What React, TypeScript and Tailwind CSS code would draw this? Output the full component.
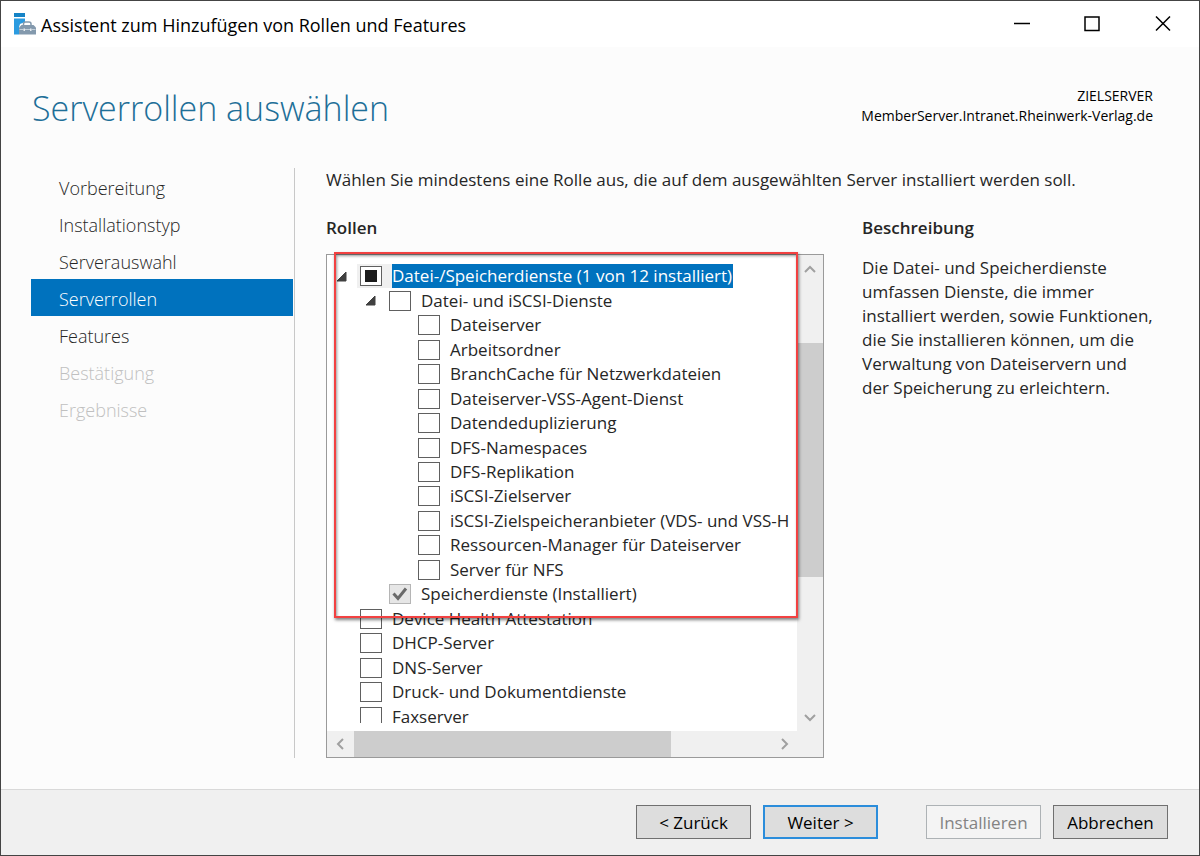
import React from 'react';

interface RoleItem {
  id: string;
  label: string;
  level: 0 | 1 | 2;
  expanded?: boolean;
  state?: 'partial' | 'checked' | 'empty';
  selected?: boolean;
}

interface StepItem {
  label: string;
  state: 'open' | 'active' | 'disabled';
}

const steps: StepItem[] = [
  { label: 'Vorbereitung', state: 'open' },
  { label: 'Installationstyp', state: 'open' },
  { label: 'Serverauswahl', state: 'open' },
  { label: 'Serverrollen', state: 'active' },
  { label: 'Features', state: 'open' },
  { label: 'Bestätigung', state: 'disabled' },
  { label: 'Ergebnisse', state: 'disabled' },
];

const roles: RoleItem[] = [
  { id: 'storage', label: 'Datei-/Speicherdienste (1 von 12 installiert)', level: 0, expanded: true, state: 'partial', selected: true },
  { id: 'file-iscsi', label: 'Datei- und iSCSI-Dienste', level: 1, expanded: true },
  { id: 'fileserver', label: 'Dateiserver', level: 2 },
  { id: 'workfolders', label: 'Arbeitsordner', level: 2 },
  { id: 'branchcache', label: 'BranchCache für Netzwerkdateien', level: 2 },
  { id: 'vss-agent', label: 'Dateiserver-VSS-Agent-Dienst', level: 2 },
  { id: 'dedup', label: 'Datendeduplizierung', level: 2 },
  { id: 'dfs-n', label: 'DFS-Namespaces', level: 2 },
  { id: 'dfs-r', label: 'DFS-Replikation', level: 2 },
  { id: 'iscsi-target', label: 'iSCSI-Zielserver', level: 2 },
  { id: 'iscsi-provider', label: 'iSCSI-Zielspeicheranbieter (VDS- und VSS-H', level: 2 },
  { id: 'fsrm', label: 'Ressourcen-Manager für Dateiserver', level: 2 },
  { id: 'nfs', label: 'Server für NFS', level: 2 },
  { id: 'storage-services', label: 'Speicherdienste (Installiert)', level: 1, state: 'checked' },
  { id: 'dha', label: 'Device Health Attestation', level: 0 },
  { id: 'dhcp', label: 'DHCP-Server', level: 0 },
  { id: 'dns', label: 'DNS-Server', level: 0 },
  { id: 'print', label: 'Druck- und Dokumentdienste', level: 0 },
  { id: 'fax', label: 'Faxserver', level: 0 },
];

const indent = ['pl-[9px]', 'pl-[38px]', 'pl-[67px]'];

function AppIcon() {
  return (
    <svg width="23" height="24" viewBox="0 0 23 24" aria-hidden="true">
      <path d="M0 1h11v4H0z" fill="#1583c6" />
      <path d="M0 6.500h11V10L6 12l-1 3v7.500H0z" fill="#2b9be0" />
      <path d="M9.500 13.500V12a2 2 0 0 1 2-2h3.500a2 2 0 0 1 2 2v1.500" fill="none" stroke="#8399ad" strokeWidth="1.500" />
      <path d="M5 15.500 7.500 13h12l2.500 2.500v7H5z" fill="#8399ad" />
      <path d="M5.500 17.500h4m1.500 0h5m1.500 0h4" stroke="#c3cfd9" />
      <path d="M9.500 16.500H11V19H9.500zM16 16.500h1.500V19H16z" fill="#e5ebf0" />
    </svg>
  );
}

function Chevron({ direction }: { direction: 'up' | 'down' | 'left' | 'right' }) {
  const paths = {
    up: 'M2 10 7 5l5 5',
    down: 'm2 5 5 5 5-5',
    left: 'M9 2 4 7l5 5',
    right: 'm5 2 5 5-5 5',
  };
  return (
    <svg width="14" height="14" viewBox="0 0 14 14" fill="none" stroke="#a0a0a0" strokeWidth="2" aria-hidden="true">
      <path d={paths[direction]} />
    </svg>
  );
}

function RoleCheckbox({ item }: { item: RoleItem }) {
  const [checked, setChecked] = React.useState(item.state === 'checked');
  const ref = React.useRef<HTMLInputElement>(null);

  React.useEffect(() => {
    if (ref.current) ref.current.indeterminate = item.state === 'partial';
  }, [item.state]);

  return (
    <span className="relative flex h-5 w-[22px] shrink-0">
      <input
        ref={ref}
        id={item.id}
        type="checkbox"
        checked={checked}
        disabled={item.state === 'checked'}
        onChange={(e) => setChecked(e.target.checked)}
        className="h-5 w-[22px] appearance-none border border-[#606060] bg-white disabled:border-[#b5b5b5] disabled:bg-[#e6e6e6]"
      />
      {item.state === 'partial' && (
        <span className="pointer-events-none absolute inset-x-[5px] inset-y-1 bg-[#1c1c1c]" />
      )}
      {checked && (
        <svg className="pointer-events-none absolute inset-0" width="22" height="20" viewBox="0 0 22 20" fill="none" stroke="#6a6a6a" strokeWidth="3" aria-hidden="true">
          <path d="m4.500 9.500 4.500 5 8-10" />
        </svg>
      )}
    </span>
  );
}

function RoleRow({ item }: { item: RoleItem }) {
  return (
    <li className={`flex min-h-0 flex-1 items-center ${indent[item.level]}`}>
      <span className="flex w-[21px] shrink-0 items-center">
        {item.expanded && (
          <button type="button" aria-label={`${item.label} reduzieren`}>
            <svg width="11" height="11" viewBox="0 0 11 11" aria-hidden="true">
              <path d="M10 1v9H1z" fill="#404040" stroke="#404040" />
            </svg>
          </button>
        )}
      </span>
      <span className={`flex h-6 items-center pr-[10px] pl-[3px] ${item.selected ? 'bg-[#f0f0f0]' : ''}`}>
        <RoleCheckbox item={item} />
      </span>
      <label
        htmlFor={item.id}
        className={`h-6 pr-px text-[17px] leading-6 whitespace-nowrap ${item.selected ? 'bg-[#0072be] text-white' : 'text-[#262626]'}`}
      >
        {item.label}
      </label>
    </li>
  );
}

export default function App() {
  return (
    <div className="flex min-h-screen flex-col border border-[#444] bg-[#fcfcfc] font-['Open_Sans','Noto_Sans',sans-serif] text-[#262626]">
      <header className="flex h-[46px] items-center bg-white pl-[13px] text-black">
        <AppIcon />
        <span className="ml-1 flex-1 pt-px text-[18px] leading-6 whitespace-nowrap">Assistent zum Hinzufügen von Rollen und Features</span>
        <button type="button" aria-label="Minimieren" className="flex h-full w-[70px] items-center justify-center">
          <svg width="16" height="16" viewBox="0 0 16 16" stroke="black" strokeWidth="1.500"><path d="M0 7.500h16" /></svg>
        </button>
        <button type="button" aria-label="Maximieren" className="flex h-full w-[70px] items-center justify-center">
          <svg width="16" height="16" viewBox="0 0 16 16" fill="none" stroke="black" strokeWidth="1.500"><path d="M1 1h14v13.500H1z" /></svg>
        </button>
        <button type="button" aria-label="Schließen" className="flex h-full w-[72px] items-center justify-center">
          <svg width="16" height="16" viewBox="0 0 16 16" stroke="black" strokeWidth="1.500"><path d="m1 .5 14 14M15 .5l-14 14" /></svg>
        </button>
      </header>

      <div className="flex h-[121px] items-start justify-between pr-[46px] pl-[31px]">
        <h1 className="mt-9 text-[34px] leading-[50px] font-light whitespace-nowrap text-[#1e6f98]">Serverrollen auswählen</h1>
        <div className="mt-[39px] text-right text-[14px] leading-5 text-black">
          <p>ZIELSERVER</p>
          <p>MemberServer.Intranet.Rheinwerk-Verlag.de</p>
        </div>
      </div>

      <div className="flex flex-1 pr-11 pb-[31px] pl-[30px]">
        <nav className="w-[264px] shrink-0 border-r border-[#c8c8c8] pr-px">
          <ul>
            {steps.map((step) => (
              <li key={step.label}>
                <button
                  type="button"
                  disabled={step.state === 'disabled'}
                  aria-current={step.state === 'active' ? 'step' : undefined}
                  className={`block h-[37px] w-full pt-[3px] pl-7 text-left text-[18px] font-light ${
                    step.state === 'active' ? 'bg-[#0072be] text-white' : step.state === 'disabled' ? 'text-[#c0c0c0]' : 'text-[#262626]'
                  }`}
                >
                  {step.label}
                </button>
              </li>
            ))}
          </ul>
        </nav>

        <main className="flex min-w-0 flex-1 flex-col pl-[31px]">
          <p className="text-[17px] leading-6 whitespace-nowrap">
            Wählen Sie mindestens eine Rolle aus, die auf dem ausgewählten Server installiert werden soll.
          </p>
          <div className="mt-6 flex flex-1 gap-[38px]">
            <section className="flex min-w-0 flex-1 flex-col">
              <h2 className="text-[17px] leading-6 font-semibold">Rollen</h2>
              <div className="mt-[14px] flex flex-1 flex-col border border-[#9a9a9a] bg-white">
                <div className="relative flex flex-1">
                  <div className="min-w-0 flex-1 pt-[9px] pb-[7px]">
                    <div className="h-[459px] overflow-hidden">
                      <ul className="flex h-[465px] flex-col">
                        {roles.map((item) => (
                          <RoleRow key={item.id} item={item} />
                        ))}
                      </ul>
                    </div>
                  </div>
                  <div className="flex w-[26px] shrink-0 flex-col bg-[#f0f0f0]">
                    <button type="button" aria-label="Nach oben" className="flex h-7 items-center justify-center"><Chevron direction="up" /></button>
                    <div className="mt-[60px] h-[234px] bg-[#cdcdcd]" />
                    <button type="button" aria-label="Nach unten" className="mt-auto flex h-7 items-center justify-center"><Chevron direction="down" /></button>
                  </div>
                  {/* Markierung um die Datei-/Speicherdienste */}
                  <div className="pointer-events-none absolute -top-[3px] right-[25px] left-[7px] h-[366px] border-2 border-[#f24141] shadow-[1px_2px_3px_rgba(0,0,0,0.5),inset_1px_2px_3px_rgba(0,0,0,0.4)]" />
                </div>
                <div className="flex h-[26px] bg-[#f0f0f0] pr-[26px]">
                  <button type="button" aria-label="Nach links" className="flex w-[27px] items-center justify-center"><Chevron direction="left" /></button>
                  <div className="flex flex-1">
                    <div className="w-[317px] bg-[#cdcdcd]" />
                  </div>
                  <button type="button" aria-label="Nach rechts" className="flex w-[27px] items-center justify-center"><Chevron direction="right" /></button>
                </div>
              </div>
            </section>

            <section className="w-[293px] shrink-0">
              <h2 className="text-[17px] leading-6 font-semibold">Beschreibung</h2>
              <p className="mt-4 text-[17px] leading-6">
                Die Datei- und Speicherdienste umfassen Dienste, die immer installiert werden, sowie Funktionen, die Sie installieren können, um die Verwaltung von Dateiservern und der Speicherung zu erleichtern.
              </p>
            </section>
          </div>
        </main>
      </div>

      <footer className="flex h-[66px] items-center justify-end gap-3 border-t border-[#d9d9d9] bg-[#f0f0f0] pr-[31px] pb-px text-[17px] text-black">
        <button type="button" className="h-[34px] w-[115px] border border-[#707070] bg-[#dddddd] pt-px">&lt; Zurück</button>
        <button type="button" className="h-[34px] w-[115px] border-2 border-[#2b8ddb] bg-[#dddddd] pt-px">Weiter &gt;</button>
        <button type="button" disabled className="ml-9 h-[34px] w-[115px] border border-[#adb2b5] bg-[#f4f4f4] pt-px text-[#838383]">Installieren</button>
        <button type="button" className="h-[34px] w-[115px] border border-[#707070] bg-[#dddddd] pt-px">Abbrechen</button>
      </footer>
    </div>
  );
}
